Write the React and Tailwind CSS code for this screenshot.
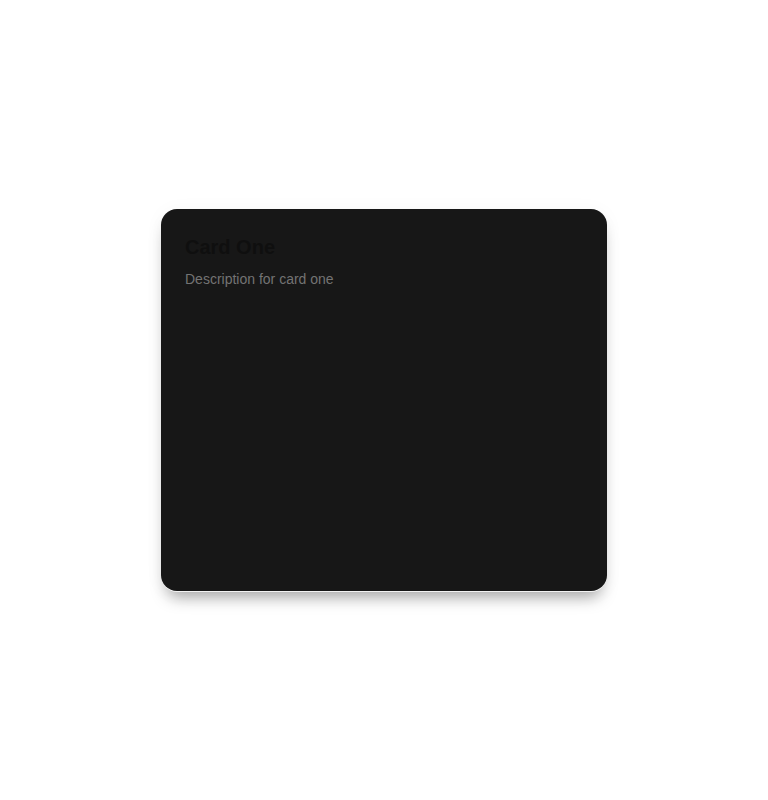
export default function App() {
  return (
    <div className="min-h-screen bg-white flex items-center justify-center" style={{ fontFamily: '"Liberation Sans", Arial, sans-serif' }}>
      <div className="w-[446px] h-[382px] bg-[#171717] rounded-2xl shadow-[0_1px_0_0_#f2f2f2,0_12px_16px_-6px_rgba(0,0,0,0.35),0_2px_20px_0_rgba(0,0,0,0.04)] p-6">
        <h2 className="text-xl font-semibold text-[#0f0f0f]">Card One</h2>
        <p className="mt-2 text-sm text-[#737373]">Description for card one</p>
      </div>
    </div>
  )
}
